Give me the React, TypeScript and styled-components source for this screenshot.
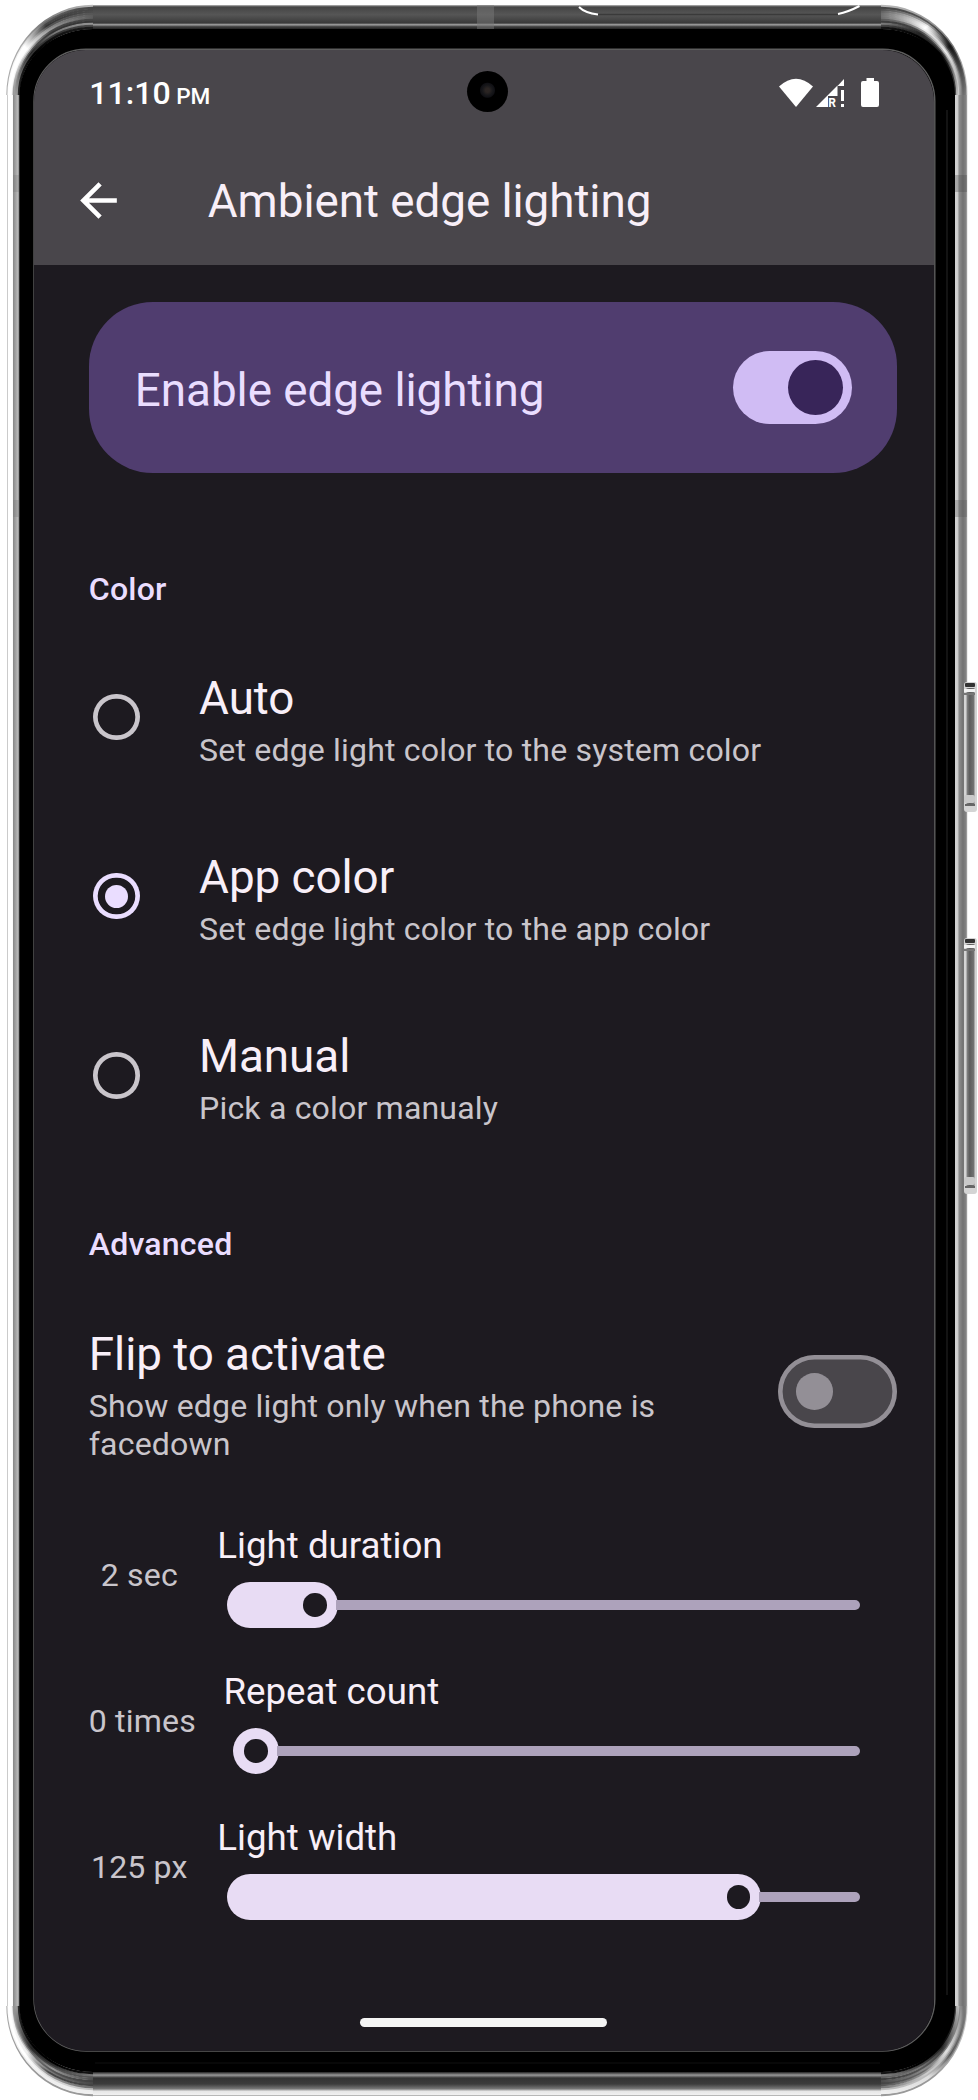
import React from "react";
import styled, { createGlobalStyle } from "styled-components";

const GlobalStyle = createGlobalStyle`
  * { box-sizing: border-box; }
  body { margin: 0; background: #fff; font-family: Roboto, sans-serif; }
`;

const c = {
  surface: "#1d1a20",
  bar: "#49464b",
  card: "#503d6f",
  accent: "#eaddff",
  text: "#f8eff8",
  muted: "#c9c5cb",
  outline: "#938f96",
};

const Device = styled.main`
  position: relative;
  width: 978px;
  height: 2100px;
  overflow: hidden;
  padding: 49.5px 44px 49.5px 33.8px;
`;

const Frame = styled.svg`
  position: absolute;
  inset: 0;
`;

const Screen = styled.div`
  position: relative;
  height: 2001px;
  display: flex;
  flex-direction: column;
  background: ${c.surface};
  border-radius: 52px;
  overflow: hidden;
`;

const Header = styled.header`
  height: 215.5px;
  flex: none;
  background: ${c.bar};
`;

const StatusBar = styled.div`
  height: 87px;
  display: flex;
  align-items: center;
  justify-content: space-between;
  padding: 0 54.5px 0 55.5px;
  color: #fff;
`;

const Clock = styled.div`
  padding-top: 4px;
  font-size: 32.1px;
  font-weight: 500;
  line-height: 38px;
`;

const Meridiem = styled.span`
  margin-left: 5.5px;
  font-size: 22.6px;
`;

const Camera = styled.div`
  position: absolute;
  left: 433.5px;
  top: 21px;
  width: 41px;
  height: 41px;
  border-radius: 50%;
  background: radial-gradient(circle at 50% 47%, #2b2523 0 2px, #17171a 5px, #101014 7px, #000 8px);
`;

const AppBar = styled.div`
  height: 128px;
  display: flex;
  align-items: center;
  padding-left: 37px;
`;

const Title = styled.h1`
  margin: 0 0 0 82px;
  padding-top: 2px;
  font-size: 45.8px;
  font-weight: 400;
  line-height: 54px;
  letter-spacing: -0.05px;
  color: ${c.text};
  white-space: nowrap;
`;

const Content = styled.div`
  padding: 36.7px 37px 0 55px;
`;

const Card = styled.section`
  height: 171.5px;
  display: flex;
  align-items: center;
  justify-content: space-between;
  padding: 0 45.2px 0 46px;
  border-radius: 64px;
  background: ${c.card};
`;

const CardLabel = styled.div`
  padding-top: 8px;
  font-size: 45.8px;
  line-height: 54px;
  letter-spacing: -0.05px;
  color: ${c.accent};
`;

const Switch = styled.div<{ $on?: boolean }>`
  width: 119.2px;
  height: 73.5px;
  flex: none;
  display: flex;
  align-items: center;
  justify-content: ${(p) => (p.$on ? "flex-end" : "flex-start")};
  padding: 0 ${(p) => (p.$on ? "9.2px" : "18.4px")};
  box-shadow: ${(p) => (p.$on ? "none" : `inset 0 0 0 4.6px ${c.outline}`)};
  border-radius: 37px;
  background: ${(p) => (p.$on ? "#d0bcf4" : c.bar)};
  &::after {
    content: "";
    width: ${(p) => (p.$on ? 55 : 36.7)}px;
    height: ${(p) => (p.$on ? 55 : 36.7)}px;
    border-radius: 50%;
    background: ${(p) => (p.$on ? "#382559" : c.outline)};
  }
`;

const SectionTitle = styled.h2<{ $before: number; $after: number }>`
  margin: 0;
  padding: ${(p) => p.$before}px 0 ${(p) => p.$after}px;
  font-size: 32.1px;
  font-weight: 500;
  line-height: 38px;
  letter-spacing: 0.18px;
  color: ${c.accent};
`;

const Option = styled.div`
  height: 179.2px;
  display: flex;
  align-items: center;
  padding-left: 4.7px;
  gap: 59.2px;
`;

const Radio = styled.div<{ $checked?: boolean }>`
  width: 46.4px;
  height: 46.4px;
  flex: none;
  display: grid;
  place-items: center;
  box-shadow: inset 0 0 0 4.7px ${(p) => (p.$checked ? c.accent : c.muted)};
  border-radius: 50%;
  &::after {
    content: "";
    width: 23px;
    height: 23px;
    border-radius: 50%;
    background: ${(p) => (p.$checked ? c.accent : "transparent")};
  }
`;

const OptionText = styled.div`
  padding-top: 7px;
`;

const ItemTitle = styled.div`
  font-size: 45.8px;
  line-height: 54px;
  letter-spacing: -0.05px;
  color: ${c.text};
`;

const ItemNote = styled.div`
  margin-top: 5px;
  font-size: 32.1px;
  line-height: 38px;
  letter-spacing: 0.16px;
  color: ${c.muted};
`;

const FlipRow = styled.div`
  display: flex;
  align-items: center;
  justify-content: space-between;
  height: 138px;
  margin-bottom: 41.5px;
`;

const FlipText = styled.div`
  width: 620px;
  padding-top: 7.4px;
`;

const SliderRow = styled.div`
  height: 146px;
  display: flex;
  align-items: center;
  gap: 27.5px;
`;

const Value = styled.div`
  min-width: 101px;
  text-align: center;
  font-size: 32.1px;
  line-height: 38px;
  letter-spacing: 0.16px;
  color: ${c.muted};
  white-space: nowrap;
`;

const SliderBody = styled.div`
  flex: 1;
  padding-top: 2px;
`;

const SliderTitle = styled.div`
  font-size: 36.7px;
  line-height: 44px;
  color: ${c.text};
`;

const Slider = styled.div`
  display: flex;
  align-items: center;
  height: 46px;
  margin: 14.5px 37px 0 9.5px;
`;

const Active = styled.div`
  height: 46px;
  min-width: 46px;
  flex: none;
  display: flex;
  align-items: center;
  justify-content: flex-end;
  padding-right: 11px;
  border-radius: 23px;
  background: #e8dcf4;
  &::after {
    content: "";
    width: 23.5px;
    height: 23.5px;
    border-radius: 50%;
    background: ${c.surface};
  }
`;

const Rest = styled.div`
  flex: 1;
  height: 9.4px;
  margin-left: -2px;
  border-radius: 0 5px 5px 0;
  background: #ada2bb;
`;

const HomeBar = styled.div`
  width: 247px;
  height: 9px;
  margin: auto auto 23.5px 326.5px;
  border-radius: 5px;
  background: #f4f4f4;
`;

const options = [
  { title: "Auto", note: "Set edge light color to the system color" },
  { title: "App color", note: "Set edge light color to the app color", checked: true },
  { title: "Manual", note: "Pick a color manualy" },
];

const sliders = [
  { title: "Light duration", value: "2 sec", width: 111 },
  { title: "Repeat count", value: "0 times", width: 46 },
  { title: "Light width", value: "125 px", width: 534.5 },
];

// Metal tones of each edge, from the outer rim to the glass.
const metal = {
  left: ["#aaa", "#fff", "#fff", "#fff", "#fff", "#eee", "#8c8c8c", "#999", "#a5a5a5", "#b0b0b0", "#aaa", "#333"],
  top: ["#bbb", "#444", "#484848", "#505050", "#565656", "#525252", "#4c4c4c", "#454545", "#3c3c3c", "#a0a0a0", "#555", "#222"],
  right: ["#ddd", "#858585", "#7c7c7c", "#747474", "#727272", "#7c7c7c", "#858585", "#8d8d8d", "#ccc", "#ccc", "#d4d4d4", "#555"],
  bottom: ["#999", "#f0f0f0", "#eee", "#bbb", "#666", "#444", "#3c3c3c", "#3a3a3a", "#333", "#555", "#999", "#222"],
};

const corners = [
  {
    id: "tl", x: 93, y: 95, sx: -1, sy: -1, side: metal.left, cap: metal.top,
    a: ["#aaa", "#eee", "#fff", "#fff", "#fff", "#fff", "#eee", "#bbb", "#555", "#222", "#333", "#000"],
    b: ["#777", "#666", "#444", "#333", "#555", "#888", "#999", "#444", "#333", "#777", "#333", "#111"],
  },
  {
    id: "tr", x: 881, y: 95, sx: 1, sy: -1, side: metal.right, cap: metal.top,
    a: ["#777", "#222", "#111", "#1a1a1a", "#333", "#777", "#ccc", "#eee", "#bbb", "#555", "#222", "#000"],
    b: ["#999", "#555", "#aaa", "#eee", "#fff", "#fff", "#eee", "#999", "#444", "#222", "#222", "#000"],
  },
  {
    id: "bl", x: 93, y: 2006, sx: -1, sy: 1, side: metal.left, cap: metal.bottom,
    a: ["#999", "#eee", "#fff", "#fff", "#eee", "#eee", "#ccc", "#777", "#444", "#222", "#222", "#000"],
    b: ["#999", "#eee", "#eee", "#ddd", "#999", "#444", "#777", "#555", "#999", "#555", "#333", "#000"],
  },
  {
    id: "br", x: 881, y: 2006, sx: 1, sy: 1, side: metal.right, cap: metal.bottom,
    a: ["#aaa", "#777", "#555", "#888", "#bbb", "#ddd", "#ddd", "#777", "#444", "#333", "#222", "#000"],
    b: ["#999", "#ddd", "#ddd", "#bbb", "#ccc", "#999", "#666", "#888", "#555", "#777", "#444", "#000"],
  },
];

const Corner = ({ k }: { k: (typeof corners)[number] }) => (
  <g>
    {k.side.map((tone, i) => {
      const t = (i + 0.5) / 12;
      const rx = 86 - 12.5 * t;
      const ry = 90 - 24 * t;
      const id = `${k.id}${i}`;
      return (
        <React.Fragment key={id}>
          <linearGradient id={id} gradientUnits="userSpaceOnUse" x1={k.x + k.sx * 86} y1={k.y} x2={k.x} y2={k.y + k.sy * 90}>
            <stop offset="0" stopColor={tone} />
            <stop offset=".38" stopColor={k.a[i]} />
            <stop offset=".62" stopColor={k.b[i]} />
            <stop offset="1" stopColor={k.cap[i]} />
          </linearGradient>
          <path
            d={`M${k.x + k.sx * rx} ${k.y}A${rx} ${ry} 0 0 ${k.sx * k.sy > 0 ? 1 : 0} ${k.x} ${k.y + k.sy * ry}`}
            fill="none"
            stroke={`url(#${id})`}
            strokeWidth="2.4"
          />
        </React.Fragment>
      );
    })}
  </g>
);

const SideButton = ({ y, h }: { y: number; h: number }) => (
  <g>
    <rect x="964" y={y} width="13" height={h} rx="3" fill="#d4d4d4" />
    <rect x="966.5" y={y + 6} width="8" height={h - 12} fill="url(#btn)" />
    <rect x="965" y={y + 1} width="10" height="4" rx="1" fill="#333" />
    <rect x="964" y={y + 7} width="11" height="3" fill="#f2f2f2" />
    <rect x="964" y={y + 11} width="11" height="2" fill="#777" />
    <rect x="964" y={y + h - 17} width="11" height="8" rx="2" fill="#c9c9c9" />
    <rect x="965" y={y + h - 8} width="10" height="2" fill="#666" />
  </g>
);

const PhoneFrame = () => (
  <Frame width="978" height="2100" viewBox="0 0 978 2100">
    <defs>
      <linearGradient id="btn" x1="0" x2="1" y1="0" y2="0">
        <stop offset="0" stopColor="#888" />
        <stop offset=".4" stopColor="#5c5c5c" />
        <stop offset="1" stopColor="#777" />
      </linearGradient>
      <linearGradient id="left" x1="7" x2="20" y1="0" y2="0" gradientUnits="userSpaceOnUse">
        <stop offset="0" stopColor="#aaa" />
        <stop offset=".1" stopColor="#fff" />
        <stop offset=".42" stopColor="#fff" />
        <stop offset=".5" stopColor="#8c8c8c" />
        <stop offset=".85" stopColor="#bcbcbc" />
        <stop offset="1" stopColor="#333" />
      </linearGradient>
      <linearGradient id="right" x1="954.5" x2="967.5" y1="0" y2="0" gradientUnits="userSpaceOnUse">
        <stop offset="0" stopColor="#777" />
        <stop offset=".08" stopColor="#d4d4d4" />
        <stop offset=".25" stopColor="#ccc" />
        <stop offset=".35" stopColor="#8d8d8d" />
        <stop offset=".65" stopColor="#727272" />
        <stop offset=".9" stopColor="#858585" />
        <stop offset="1" stopColor="#ddd" />
      </linearGradient>
      <linearGradient id="top" x1="0" x2="0" y1="5" y2="29" gradientUnits="userSpaceOnUse">
        <stop offset="0" stopColor="#bbb" />
        <stop offset=".08" stopColor="#444" />
        <stop offset=".4" stopColor="#565656" />
        <stop offset=".75" stopColor="#3a3a3a" />
        <stop offset=".82" stopColor="#a0a0a0" />
        <stop offset=".9" stopColor="#444" />
        <stop offset="1" stopColor="#222" />
      </linearGradient>
      <linearGradient id="bottom" x1="0" x2="0" y1="2072" y2="2096" gradientUnits="userSpaceOnUse">
        <stop offset="0" stopColor="#222" />
        <stop offset=".13" stopColor="#999" />
        <stop offset=".25" stopColor="#333" />
        <stop offset=".5" stopColor="#3c3c3c" />
        <stop offset=".7" stopColor="#777" />
        <stop offset=".8" stopColor="#e6e6e6" />
        <stop offset=".94" stopColor="#f0f0f0" />
        <stop offset="1" stopColor="#999" />
      </linearGradient>
    </defs>
    <rect x="7" y="95" width="13.5" height="1911" fill="url(#left)" />
    <rect x="954" y="95" width="13.5" height="1911" fill="url(#right)" />
    <rect x="93" y="5" width="788" height="25" fill="url(#top)" />
    <rect x="93" y="2071" width="788" height="25" fill="url(#bottom)" />
    {corners.map((k) => (
      <Corner key={k.id} k={k} />
    ))}
    <rect x="477" y="5" width="17" height="24" fill="#777" opacity=".5" />
    <rect x="13" y="175" width="7" height="17" fill="#666" opacity=".2" />
    <rect x="955" y="175" width="12" height="17" fill="#444" opacity=".3" />
    <rect x="13" y="500" width="7" height="17" fill="#777" opacity=".3" />
    <rect x="955" y="500" width="12" height="17" fill="#555" opacity=".3" />
    <path d="M597 14.5H838" fill="none" stroke="#3a3a3a" strokeWidth="1.5" />
    <path d="M579 7Q585 13 598 14.5M838 14Q848 12 859.500 6" fill="none" stroke="#fff" strokeWidth="2" />
    <path d="M19.5 95A73.5 66 0 0 1 93 29H881.5A73.5 66 0 0 1 955 95V2006A73.5 66 0 0 1 881.5 2072H93A73.5 66 0 0 1 19.5 2006Z" fill="#000" />
    <path d="M947 110V1995" stroke="#202020" strokeWidth="1.2" />
    <path d="M95 2063H880" stroke="#111" strokeWidth="1.2" />
    <rect x="34" y="49.2" width="900.8" height="2001.8" rx="52" fill="none" stroke="#5d5d5d" strokeWidth="1.4" />
    <SideButton y={682} h={130} />
    <SideButton y={938} h={256} />
  </Frame>
);

const StatusIcons = () => (
  <svg width="101" height="40" viewBox="0 -5 101 40" fill="#fff">
    <path d="M0 8.5Q17-7 34 8.5L17 29Z" />
    <path d="M37 29L58.5 7.5V18H49V29Z" />
    <path d="M65 1V8H58.5Z" />
    <text x="49.2" y="29" fontSize="12" fontWeight="700" fontFamily="Roboto">R</text>
    <rect x="62" y="12" width="3" height="11" />
    <rect x="62" y="26" width="3" height="3" />
    <path d="M87.5 0H95V3H98Q100 3 100 5V27Q100 29 98 29H84Q82 29 82 27V5Q82 3 84 3H87.5Z" />
  </svg>
);

export default function App() {
  return (
    <>
      <GlobalStyle />
      <Device>
        <PhoneFrame />
        <Screen>
          <Header>
            <StatusBar>
              <Clock>11:10<Meridiem>PM</Meridiem></Clock>
              <StatusIcons />
            </StatusBar>
            <Camera />
            <AppBar>
              <svg width="55" height="55" viewBox="0 0 24 24" fill="#fff">
                <path d="M20 11H7.83l5.59-5.59L12 4l-8 8 8 8 1.41-1.41L7.83 13H20v-2z" />
              </svg>
              <Title>Ambient edge lighting</Title>
            </AppBar>
          </Header>
          <Content>
            <Card>
              <CardLabel>Enable edge lighting</CardLabel>
              <Switch $on />
            </Card>
            <SectionTitle $before={97} $after={19.2}>Color</SectionTitle>
            {options.map((o) => (
              <Option key={o.title}>
                <Radio $checked={o.checked} />
                <OptionText>
                  <ItemTitle>{o.title}</ItemTitle>
                  <ItemNote>{o.note}</ItemNote>
                </OptionText>
              </Option>
            ))}
            <SectionTitle $before={60.3} $after={59.2}>Advanced</SectionTitle>
            <FlipRow>
              <FlipText>
                <ItemTitle>Flip to activate</ItemTitle>
                <ItemNote>Show edge light only when the phone is facedown</ItemNote>
              </FlipText>
              <Switch />
            </FlipRow>
            {sliders.map((s) => (
              <SliderRow key={s.title}>
                <Value>{s.value}</Value>
                <SliderBody>
                  <SliderTitle>{s.title}</SliderTitle>
                  <Slider>
                    <Active style={{ width: s.width }} />
                    <Rest />
                  </Slider>
                </SliderBody>
              </SliderRow>
            ))}
          </Content>
          <HomeBar />
        </Screen>
      </Device>
    </>
  );
}
